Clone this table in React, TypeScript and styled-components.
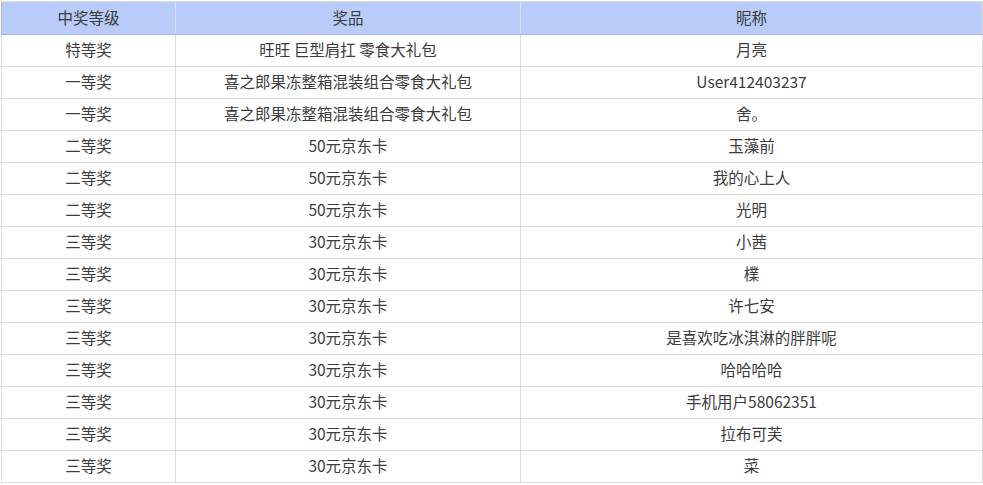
import React from "react";
import styled, { createGlobalStyle } from "styled-components";

const GlobalStyle = createGlobalStyle`
  html, body { margin: 0; padding: 0; background: #ffffff; }
  body { font-family: "Microsoft YaHei", "Noto Sans CJK SC", "Noto Sans", sans-serif; }
`;

const Wrapper = styled.div`
  padding: 1px 0 0 1px;
  width: 982px;
`;

const Table = styled.table`
  width: 982px;
  border-collapse: collapse;
  table-layout: fixed;
  font-size: 15.5px;
  color: #3c3c3c;
`;

const HeadCell = styled.th<{ $w?: number }>`
  ${(p) => (p.$w ? `width: ${p.$w}px;` : "")}
  height: 30px;
  padding: 0 0 2px;
  font-weight: normal;
  text-align: center;
  background: #b8cbf9;
  border: 1px solid #dcdcdc;
  border-bottom-color: #a9b9dd;
  border-left-color: #a9b9dd;
  line-height: 30px;
`;

const Cell = styled.td`
  height: 29px;
  padding: 0 0 2px;
  text-align: center;
  border: 1px solid #dcdcdc;
  line-height: 29px;
  white-space: nowrap;
`;

const rows: [string, string, string][] = [
  ["特等奖", "旺旺 巨型肩扛 零食大礼包", "月亮"],
  ["一等奖", "喜之郎果冻整箱混装组合零食大礼包", "User412403237"],
  ["一等奖", "喜之郎果冻整箱混装组合零食大礼包", "舍。"],
  ["二等奖", "50元京东卡", "玉藻前"],
  ["二等奖", "50元京东卡", "我的心上人"],
  ["二等奖", "50元京东卡", "光明"],
  ["三等奖", "30元京东卡", "小茜"],
  ["三等奖", "30元京东卡", "檏"],
  ["三等奖", "30元京东卡", "许七安"],
  ["三等奖", "30元京东卡", "是喜欢吃冰淇淋的胖胖呢"],
  ["三等奖", "30元京东卡", "哈哈哈哈"],
  ["三等奖", "30元京东卡", "手机用户58062351"],
  ["三等奖", "30元京东卡", "拉布可芙"],
  ["三等奖", "30元京东卡", "菜"],
];

export default function App() {
  return (
    <>
      <GlobalStyle />
      <Wrapper>
        <Table>
          <thead>
            <tr>
              <HeadCell $w={173}>中奖等级</HeadCell>
              <HeadCell $w={344}>奖品</HeadCell>
              <HeadCell>昵称</HeadCell>
            </tr>
          </thead>
          <tbody>
            {rows.map((r, i) => (
              <tr key={i}>
                <Cell>{r[0]}</Cell>
                <Cell>{r[1]}</Cell>
                <Cell>{r[2]}</Cell>
              </tr>
            ))}
          </tbody>
        </Table>
      </Wrapper>
    </>
  );
}
